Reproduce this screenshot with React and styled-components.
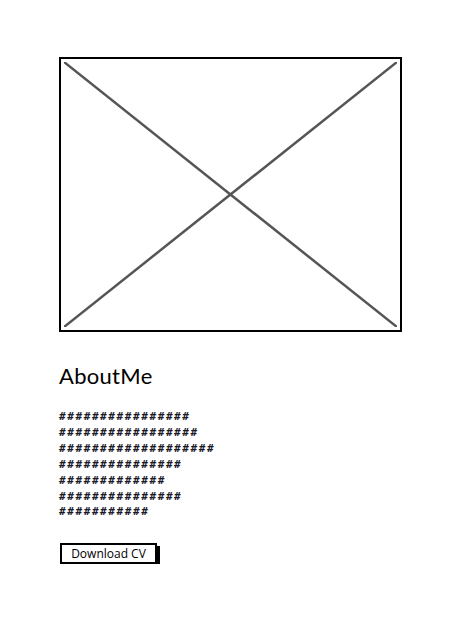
import styled, { createGlobalStyle } from 'styled-components';

const GlobalStyle = createGlobalStyle`
    body {
        margin: 0;
        background: #FFF;
        font-family: "Lato", "Open Sans", sans-serif;
    }
`;

const Page = styled.div`
    display: flex;
    flex-direction: column;
    align-items: flex-start;
    padding: 57px 0 0 59px;
`;
const Placeholder = styled.div`
    width: 343px;
    height: 275px;
    box-sizing: border-box;
    border: 2px solid #000;
    padding: 3px;
`;
const Cross = styled.svg`
    display: block;
    width: 100%;
    height: 100%;
`;
const Title = styled.h1`
    margin: 29px 0 0;
    font-size: 22px;
    font-weight: normal;
    line-height: 30px;
    letter-spacing: 0.3px;
    color: #000;
`;
const Text = styled.div`
    margin-top: 18px;
    font-family: "DejaVu Sans Mono", monospace;
    font-size: 11px;
    font-weight: bold;
    line-height: 15.9px;
    letter-spacing: 1.6px;
    color: #1a1a2a;
    white-space: pre;
`;
const Button = styled.button`
    margin: 23px 0 0 1px;
    padding: 0;
    height: 21px;
    width: 97px;
    background: #FFF;
    border: 2px solid #000;
    box-shadow: 3px 3px 0 #000;
    font-family: "Open Sans", sans-serif;
    font-size: 12px;
    line-height: 17px;
    color: #000;
    cursor: pointer;
`;

const lines = [16, 17, 19, 15, 13, 15, 11];

const App = () => {
    return (
        <Page>
            <GlobalStyle />
            <Placeholder>
                <Cross viewBox="0 0 100 100" preserveAspectRatio="none">
                    <line x1="0" y1="0" x2="100" y2="100" stroke="#555" strokeWidth="2.5" vectorEffect="non-scaling-stroke" />
                    <line x1="100" y1="0" x2="0" y2="100" stroke="#555" strokeWidth="2.5" vectorEffect="non-scaling-stroke" />
                </Cross>
            </Placeholder>
            <Title>AboutMe</Title>
            <Text>{lines.map((n) => '#'.repeat(n)).join('\n')}</Text>
            <Button>Download CV</Button>
        </Page>
    );
};
export default App;
